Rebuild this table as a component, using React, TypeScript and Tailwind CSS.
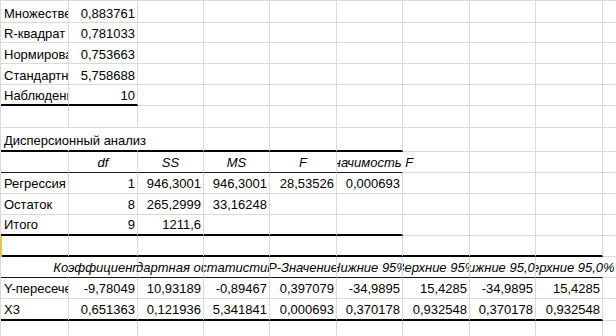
import React from "react";

type Cell = {
  t?: string;
  a?: "l" | "r" | "c";
  i?: boolean;
  spill?: "l" | "r";
  noR?: boolean;
};

type Row = {
  cells: Cell[];
  b?: "thick" | "thin";
  span?: number; // how many columns get the special bottom border
  mark?: boolean;
  low?: boolean;
};

const colW = [
  "w-[68px]",
  "w-[69px]",
  "w-[66px]",
  "w-[66px]",
  "w-[67px]",
  "w-[66px]",
  "w-[67px]",
  "w-[66px]",
  "w-[67px]",
  "w-[67px]",
];

const rowH = [
  "h-[22px]",
  "h-[20px]",
  "h-[21px]",
  "h-[21px]",
  "h-[21px]",
  "h-[22px]",
  "h-[24px]",
  "h-[21px]",
  "h-[21px]",
  "h-[21px]",
  "h-[21px]",
  "h-[21px]",
  "h-[21px]",
  "h-[21px]",
  "h-[22px]",
  "h-[21px]",
];

const L = (t: string): Cell => ({ t, a: "l" });
const N = (t: string): Cell => ({ t, a: "r" });
const H = (t: string): Cell => ({ t, a: "c", i: true });

const rows: Row[] = [
  { cells: [L("Множественный R"), N("0,883761")], low: true },
  { cells: [L("R-квадрат"), N("0,781033")], low: true },
  { cells: [L("Нормированный R-квадрат"), N("0,753663")], low: true },
  { cells: [L("Стандартная ошибка"), N("5,758688")], low: true },
  { cells: [L("Наблюдения"), N("10")], b: "thick", span: 2, low: true },
  { cells: [] },
  {
    cells: [{ t: "Дисперсионный анализ", a: "l", spill: "r", noR: true }, { noR: true }],
    b: "thick",
    span: 6,
  },
  {
    cells: [{}, H("df"), H("SS"), H("MS"), H("F"), { t: "Значимость F", a: "c", i: true, spill: "r", noR: true }],
    b: "thin",
    span: 6,
  },
  { cells: [L("Регрессия"), N("1"), N("946,3001"), N("946,3001"), N("28,53526"), N("0,000693")] },
  { cells: [L("Остаток"), N("8"), N("265,2999"), N("33,16248")] },
  { cells: [L("Итого"), N("9"), N("1211,6")], b: "thick", span: 6 },
  { cells: [], b: "thick", span: 9, mark: true },
  {
    cells: [
      { noR: true },
      { t: "Коэффициенты", a: "c", i: true, spill: "l" },
      H("Стандартная ошибка"),
      H("t-статистика"),
      H("P-Значение"),
      H("Нижние 95%"),
      H("Верхние 95%"),
      H("Нижние 95,0%"),
      { t: "Верхние 95,0%", a: "c", i: true, spill: "r", noR: true },
    ],
    b: "thin",
    span: 9,
  },
  {
    cells: [
      L("Y-пересечение"),
      N("-9,78049"),
      N("10,93189"),
      N("-0,89467"),
      N("0,397079"),
      N("-34,9895"),
      N("15,4285"),
      N("-34,9895"),
      N("15,4285"),
    ],
  },
  {
    cells: [
      L("X3"),
      N("0,651363"),
      N("0,121936"),
      N("5,341841"),
      N("0,000693"),
      N("0,370178"),
      N("0,932548"),
      N("0,370178"),
      N("0,932548"),
    ],
    b: "thick",
    span: 9,
  },
  { cells: [] },
];

function GridCell({ cell, w, bottom, low }: { cell: Cell; w: string; bottom: string; low?: boolean }) {
  const justify =
    cell.a === "r" ? "justify-end pr-[2px]" : cell.a === "c" ? "justify-center" : "justify-start pl-[3px]";
  const clip =
    cell.spill === "r"
      ? "overflow-visible [clip-path:inset(0_-300px_0_0)]"
      : cell.spill === "l"
        ? "overflow-visible [clip-path:inset(0_0_0_-300px)]"
        : "overflow-hidden";
  return (
    <div
      className={`flex shrink-0 items-end whitespace-nowrap border-r ${low ? "pb-0" : "pb-[1px]"} ${
        cell.noR ? "border-r-transparent" : "border-r-[#d9d9d9]"
      } ${w} ${bottom} ${justify} ${clip} ${cell.i ? "italic" : ""}`}
    >
      {cell.t && <span className="shrink-0">{cell.t}</span>}
    </div>
  );
}

export default function App() {
  return (
    <div className="h-[336px] w-[616px] overflow-hidden bg-white font-['Liberation_Sans','Arial',sans-serif] text-[13px] leading-[16px] text-black">
      <div className="flex flex-col border-t border-t-[#d9d9d9]">
        {rows.map((row, r) => (
          <div
            key={r}
            className={`flex border-l ${row.mark ? "border-l-2 border-l-[#f0c24a]" : "border-l-[#d9d9d9]"} ${rowH[r]}`}
          >
            {colW.map((w, c) => {
              const cell = row.cells[c] ?? {};
              const special = row.b && c < (row.span ?? 0);
              const bottom = special
                ? row.b === "thick"
                  ? "border-b-2 border-b-black"
                  : "border-b border-b-[#1a1a1a]"
                : "border-b border-b-[#d9d9d9]";
              const width = row.mark && c === 0 ? "w-[67px]" : w;
              return <GridCell key={c} cell={cell} w={width} bottom={bottom} low={row.low} />;
            })}
          </div>
        ))}
      </div>
    </div>
  );
}
